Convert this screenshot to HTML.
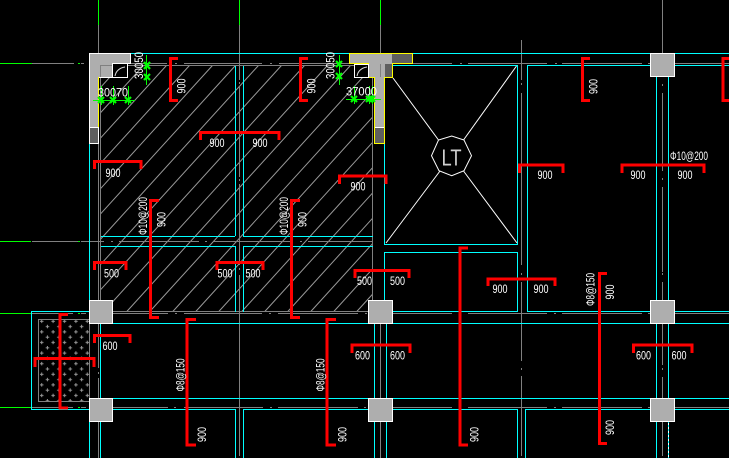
<!DOCTYPE html>
<html><head><meta charset="utf-8"><style>
html,body{margin:0;padding:0;background:#000;width:729px;height:458px;overflow:hidden}
svg{display:block}
.c{stroke-linecap:butt;fill:none;shape-rendering:crispEdges}
text{font-family:"Liberation Sans",sans-serif;font-size:12px;fill:#fff;text-anchor:middle}
</style></head><body>
<svg width="729" height="458" viewBox="0 0 729 458" xmlns="http://www.w3.org/2000/svg">
<rect width="729" height="458" fill="#000"/>
<defs>
<pattern id="x" patternUnits="userSpaceOnUse" x="38" y="319.5" width="11.4" height="10.6">
<path d="M2,1.8H5.5M3.7,0V3.5M7.7,7.1H11.2M9.4,5.3V8.8" stroke="#999" stroke-width="1" fill="none"/>
</pattern>
</defs>
<!-- hatch -->
<path stroke="#999" stroke-width="1" fill="none" d="M100.5,87.45L120.45,65.5M100.5,112.75L143.45,65.5M100.5,138.05L166.45,65.5M100.5,163.35L189.45,65.5M100.5,188.65L212.45,65.5M100.5,213.95L235.45,65.5M100.5,239.25L258.45,65.5M100.5,264.55L281.45,65.5M100.5,289.85L304.45,65.5M103.8,311.5L327.45,65.5M126.8,311.5L350.45,65.5M149.8,311.5L372.5,66.55M172.8,311.5L372.5,91.85M195.8,311.5L372.5,117.15M218.8,311.5L372.5,142.45M241.8,311.5L372.5,167.75M264.8,311.5L372.5,193.05M287.8,311.5L372.5,218.35M310.8,311.5L372.5,243.65M333.8,311.5L372.5,268.95M356.8,311.5L372.5,294.25"/>
<!-- green -->
<path class="c" stroke="#0f0" d="M98.5,0V25M239.5,0V25M380.5,0V25M0,63.5H32M0,241.5H31M0,313.5H32M0,407.5H32M78,63.5H80M78,241.5H80M78,313.5H80M78,407.5H80"/>
<!-- gray -->
<path class="c" stroke="#808080" d="M98.5,25V53M239.5,25V80M239.5,82V84M239.5,87V177M239.5,179V181M239.5,184V265M239.5,268V270M239.5,275V456M380.5,25V53M380.5,323V398M380.5,421V458M662.5,0V53M662.5,84V86M662.5,93V171M662.5,178V180M662.5,187V272M662.5,273V275M662.5,282V300M662.5,323V365M662.5,368V370M662.5,377V398M662.5,421V456M521.5,40V80M521.5,83V85M521.5,93V265M521.5,273V275M521.5,282V361M521.5,368V370M521.5,376V456M100.5,65V313M372.5,65V312M98.5,143V300M98.5,323V368M98.5,372V374M98.5,378V398M98.5,421V458"/>
<path class="c" stroke="#808080" d="M32,63.5H74M81,63.5H84M131,63.5H167M175,63.5H177M184,63.5H262M270,63.5H272M279,63.5H349M412,63.5H452M460,63.5H462M468,63.5H547M555,63.5H557M562,63.5H642M648,63.5H650M675,63.5H729M100,65.5H372M32,241.5H78M81,241.5H104M111,241.5H113M119,241.5H199M205,241.5H207M214,241.5H293M300,241.5H302M308,241.5H372M100,311.5H372M32,313.5H73M81,313.5H86M113,313.5H168M175,313.5H177M184,313.5H262M269,313.5H271M278,313.5H358M365,313.5H367M393,313.5H452M468,313.5H547M554,313.5H556M562,313.5H642M648,313.5H650M675,313.5H729M32,407.5H73M81,407.5H86M113,407.5H168M174,407.5H176M184,407.5H263M270,407.5H272M278,407.5H358M364,407.5H366M393,407.5H452M468,407.5H547M554,407.5H556M562,407.5H642M648,407.5H650M675,407.5H729"/>
<!-- cyan -->
<path class="c" stroke="#0ff" d="M131,53.5H349M412,53.5H650M675,53.5H729M385,65.5H518M527,65.5H650M675,65.5H729M101,236.5H235M243,236.5H373M101,246.5H235M243,246.5H373M385,244.5H518M384,252.5H518M384,311.5H518M527,311.5H650M675,311.5H729M31,311.5H89M113,323.5H368M393,323.5H650M675,323.5H729M113,398.5H368M393,398.5H650M675,398.5H729M31,409.5H89M113,409.5H235M243,409.5H368M393,409.5H517M525,409.5H650M675,409.5H729M31.5,311V410M89.5,143V300M89.5,323V398M89.5,421V458M100.5,323V398M100.5,421V458M235.5,66V236M243.5,66V236M235.5,246V312M243.5,246V312M235.5,409V458M243.5,409V458M384.5,77V245M384.5,252V300M517.5,65V245M517.5,252V312M527.5,65V312M517.5,409V458M525.5,409V458M374.5,323V398M386.5,323V398M374.5,421V458M386.5,421V458M656.5,77V300M668.5,77V300M656.5,323V398M668.5,323V398M656.5,421V458"/>
<path class="c" stroke="#0ff" d="M668.5,421V458"/>
<path class="c" stroke="#fff" stroke-dasharray="2 2" d="M668.5,423V458"/>
<!-- hatched cross block -->
<rect x="38.5" y="319.5" width="51" height="82" fill="url(#x)" stroke="#808080"/>
<!-- columns -->
<g class="c" fill="#aeaeae" stroke="#fff">
<path fill="#aeaeae" d="M89.5,53.5H130.5V63.5H112.5V77.5H98.5V143.5H89.5Z"/>
<rect x="89.5" y="300.5" width="23" height="23" fill="#aeaeae"/>
<rect x="89.5" y="398.5" width="23" height="23" fill="#aeaeae"/>
<rect x="368.5" y="300.5" width="24" height="23" fill="#aeaeae"/>
<rect x="368.5" y="398.5" width="24" height="23" fill="#aeaeae"/>
<rect x="650.5" y="53.5" width="24" height="23" fill="#aeaeae"/>
<rect x="650.5" y="300.5" width="24" height="23" fill="#aeaeae"/>
<rect x="650.5" y="398.5" width="24" height="23" fill="#aeaeae"/>
</g>
<rect x="90" y="128" width="8" height="15" fill="#5f5f5f" shape-rendering="crispEdges"/>
<path class="c" stroke="#fff" d="M89,127.5H99"/>
<path class="c" stroke="#ff0" d="M98.5,77V127"/>
<path fill="#aeaeae" stroke="#ff0" shape-rendering="crispEdges" d="M349.5,53.5H412.5V63.5H392.5V77.5H384.5V143.5H374.5V77.5H368.5V63.5H349.5Z"/>
<g fill="#5f5f5f" shape-rendering="crispEdges">
<rect x="392" y="54" width="20" height="9"/>
<rect x="385" y="64" width="7" height="13"/>
<rect x="375" y="128" width="9" height="15"/>
</g>
<path class="c" stroke="#fff" d="M375,127.5H384"/>
<path class="c" stroke="#808080" d="M100.5,77V65.5H112M380.5,64V77"/>
<!-- small window boxes -->
<rect x="112.5" y="63.5" width="15" height="14" fill="#000" stroke="#fff" shape-rendering="crispEdges"/>
<path d="M115,76C116,71 119,68 125,67" fill="none" stroke="#ddd"/>
<rect x="354.5" y="64.5" width="14" height="13" fill="#000" stroke="#fff" shape-rendering="crispEdges"/>
<path d="M357,76C358,71 361,68 367,67" fill="none" stroke="#ddd"/>
<!-- lift -->
<g fill="none" stroke="#fff" stroke-width="1">
<path d="M393,78L438.5,140M516.5,66L463.5,140M386,243L440,171M517,243L463.5,171"/>
<path d="M431.5,155.7L438.5,140L451.7,136L464,140L471.5,155.7L464,170.7L451.7,175.7L439,170.7Z"/>
</g>
<text x="451.5" y="165.5" style="font-size:23px;fill:#d0d0d0" textLength="20" lengthAdjust="spacingAndGlyphs">LT</text>
<!-- green marks -->
<g fill="none" stroke="#0f0" stroke-width="1" shape-rendering="crispEdges">
<path d="M146.5,55V85M93,100.5H135M101.5,86V105M113.5,86V105M128.5,86V105M339.5,55V85M346,99.5H381M354.5,86V104M369.5,86V104M372.5,86V104"/>
</g>
<g fill="none" stroke="#0f0" stroke-width="2.2">
<path d="M144,62L150,69M150,62L144,69M144,74L150,80M150,74L144,80M98,97L104,103M104,97L98,103M110,97L116,103M116,97L110,103M125,97L131,103M131,97L125,103M336,61L342,67M342,61L336,67M336,73L342,79M342,73L336,79M351,96L357,102M357,96L351,102M366,96L372,102M372,96L366,102M369,96L375,102M375,96L369,102"/>
</g>
<!-- red -->
<g fill="none" stroke="#f00" stroke-width="3" shape-rendering="crispEdges">
<path d="M178,58.5H170.5V100.5H178M308,58.5H300.5V100.5H308M590,58.5H582.5V100.5H590M729,58.5H723V100.5H729"/>
<path d="M200.5,140V132.5H279V140M94.5,169V161.5H141V169M339.5,184V176H386V184M519.5,173V165H563V173M622,173V165H704V173M94.5,270V262.5H126V270M217,270V262.5H263V270M355,278V270.5H409V278M488,286V279H555V286M352,353V345H410V353M94.5,343V335.5H130V343M633.5,353V345H692V353"/>
<path d="M159,200.5H150.5V317.5H159M300,200.5H291.5V317.5H300M196,319.5H187V445H196M336,319.5H327V445H336M468,248H460V445H468M607,273.5H599.5V443.5H607"/>
<path d="M68,314.5H60V408H68"/>
<path d="M35,367V358.5H94V367"/>
</g>
<!-- text horizontal -->
<g>
<text x="217" y="147" textLength="15" lengthAdjust="spacingAndGlyphs">900</text>
<text x="260" y="147" textLength="15" lengthAdjust="spacingAndGlyphs">900</text>
<text x="113" y="177" textLength="15" lengthAdjust="spacingAndGlyphs">900</text>
<text x="358" y="190.5" textLength="15" lengthAdjust="spacingAndGlyphs">900</text>
<text x="545" y="179" textLength="15" lengthAdjust="spacingAndGlyphs">900</text>
<text x="638" y="179" textLength="15" lengthAdjust="spacingAndGlyphs">900</text>
<text x="685" y="179" textLength="15" lengthAdjust="spacingAndGlyphs">900</text>
<text x="689" y="160" textLength="38" lengthAdjust="spacingAndGlyphs">Φ10@200</text>
<text x="111.5" y="277.5" textLength="15" lengthAdjust="spacingAndGlyphs">500</text>
<text x="225" y="277.5" textLength="15" lengthAdjust="spacingAndGlyphs">500</text>
<text x="253" y="277.5" textLength="15" lengthAdjust="spacingAndGlyphs">500</text>
<text x="364.5" y="285" textLength="15" lengthAdjust="spacingAndGlyphs">500</text>
<text x="397.5" y="285" textLength="15" lengthAdjust="spacingAndGlyphs">500</text>
<text x="500" y="293" textLength="15" lengthAdjust="spacingAndGlyphs">900</text>
<text x="541" y="293" textLength="15" lengthAdjust="spacingAndGlyphs">900</text>
<text x="362.5" y="359.5" textLength="15" lengthAdjust="spacingAndGlyphs">600</text>
<text x="397.5" y="359.5" textLength="15" lengthAdjust="spacingAndGlyphs">600</text>
<text x="643.5" y="359.5" textLength="15" lengthAdjust="spacingAndGlyphs">600</text>
<text x="679" y="359.5" textLength="15" lengthAdjust="spacingAndGlyphs">600</text>
<text x="110" y="350" textLength="15" lengthAdjust="spacingAndGlyphs">600</text>
<text x="113" y="96.5" textLength="30" lengthAdjust="spacingAndGlyphs">30070</text>
<text x="361.5" y="95.5" textLength="31" lengthAdjust="spacingAndGlyphs">37000</text>
</g>
<!-- text rotated -->
<g>
<text transform="translate(181,86) rotate(-90)" y="4.5" textLength="15" lengthAdjust="spacingAndGlyphs">900</text>
<text transform="translate(311,86) rotate(-90)" y="4.5" textLength="15" lengthAdjust="spacingAndGlyphs">900</text>
<text transform="translate(593,86.5) rotate(-90)" y="4.5" textLength="15" lengthAdjust="spacingAndGlyphs">900</text>
<text transform="translate(161,219.5) rotate(-90)" y="4.5" textLength="15" lengthAdjust="spacingAndGlyphs">900</text>
<text transform="translate(302,219.5) rotate(-90)" y="4.5" textLength="15" lengthAdjust="spacingAndGlyphs">900</text>
<text transform="translate(201.5,434.5) rotate(-90)" y="4.5" textLength="15" lengthAdjust="spacingAndGlyphs">900</text>
<text transform="translate(342,434.5) rotate(-90)" y="4.5" textLength="15" lengthAdjust="spacingAndGlyphs">900</text>
<text transform="translate(474,434.5) rotate(-90)" y="4.5" textLength="15" lengthAdjust="spacingAndGlyphs">900</text>
<text transform="translate(609.5,292) rotate(-90)" y="4.5" textLength="15" lengthAdjust="spacingAndGlyphs">900</text>
<text transform="translate(609.5,427.5) rotate(-90)" y="4.5" textLength="15" lengthAdjust="spacingAndGlyphs">900</text>
<text transform="translate(142.5,216) rotate(-90)" y="4.5" textLength="38" lengthAdjust="spacingAndGlyphs">Φ10@200</text>
<text transform="translate(283.5,216) rotate(-90)" y="4.5" textLength="38" lengthAdjust="spacingAndGlyphs">Φ10@200</text>
<text transform="translate(180,375) rotate(-90)" y="4.5" textLength="33" lengthAdjust="spacingAndGlyphs">Φ8@150</text>
<text transform="translate(320,375) rotate(-90)" y="4.5" textLength="33" lengthAdjust="spacingAndGlyphs">Φ8@150</text>
<text transform="translate(590,289.5) rotate(-90)" y="4.5" textLength="33" lengthAdjust="spacingAndGlyphs">Φ8@150</text>
<text transform="translate(138.5,65.5) rotate(-90)" y="4.5" textLength="27" lengthAdjust="spacingAndGlyphs">30050</text>
<text transform="translate(330,65.5) rotate(-90)" y="4.5" textLength="27" lengthAdjust="spacingAndGlyphs">30050</text>
</g>
</svg>
</body></html>
